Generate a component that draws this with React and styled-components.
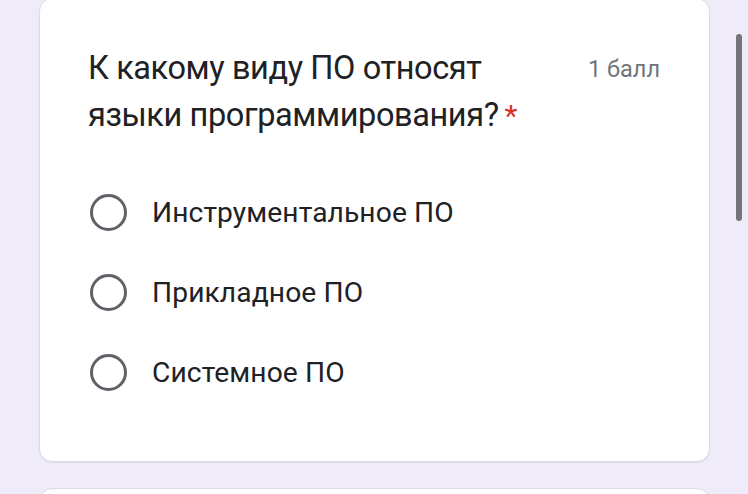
import React from "react";
import styled, { createGlobalStyle } from "styled-components";

const Global = createGlobalStyle`
  html, body { margin: 0; padding: 0; background: #efebf8; overflow: hidden; }
  body { font-family: Roboto, "Noto Sans", Arial, sans-serif; }
`;

const Page = styled.div`
  position: relative;
  width: 748px;
  height: 494px;
  overflow: hidden;
  display: flex;
  flex-direction: column;
  gap: 26px;
  padding: 0 38px 0 39px;
  box-sizing: border-box;
`;

const Card = styled.section`
  flex: none;
  margin-top: ${(p) => p.$offset || 0}px;
  background: #ffffff;
  border: 1px solid #dcdae2;
  border-radius: 13px;
  box-shadow: 0 1px 1px rgba(60, 60, 80, 0.08);
  box-sizing: border-box;
  height: ${(p) => p.$height}px;
  padding: 46px 48px 0 48px;
`;

const Header = styled.div`
  display: flex;
  justify-content: space-between;
  align-items: flex-start;
`;

const Title = styled.h2`
  margin: 0;
  width: 440px;
  font-family: Roboto, sans-serif;
  font-weight: 400;
  font-size: 32.5px;
  line-height: 47px;
  color: #202124;
  letter-spacing: -0.4px;
`;

const Star = styled.span`
  color: #d93025;
  margin-left: 6px;
  font-size: 30px;
`;

const Points = styled.span`
  font-family: Roboto, sans-serif;
  font-size: 23.5px;
  line-height: 47px;
  color: #70757a;
  white-space: nowrap;
  margin-top: 1px;
  margin-right: 1px;
`;

const Options = styled.div`
  display: flex;
  flex-direction: column;
  gap: 43px;
  margin-top: 55px;
`;

const Option = styled.label`
  display: flex;
  align-items: center;
  gap: 25px;
  height: 37px;
  padding-left: 2px;
`;

const Radio = styled.span`
  width: 37px;
  height: 37px;
  box-sizing: border-box;
  border: 3.5px solid #5f6368;
  border-radius: 50%;
  flex: none;
`;

const OptionText = styled.span`
  font-family: Roboto, sans-serif;
  font-size: 28.2px;
  color: #202124;
  letter-spacing: 0.1px;
`;

const Scrollbar = styled.div`
  position: absolute;
  left: 736px;
  top: 34px;
  width: 6px;
  height: 187px;
  border-radius: 3px;
  background: #77737d;
`;

const options = ["Инструментальное ПО", "Прикладное ПО", "Системное ПО"];

export default function App() {
  return (
    <>
      <Global />
      <Page>
        <Card $offset={-2} $height={464}>
          <Header>
            <Title>
              К какому виду ПО относят языки программирования?<Star>*</Star>
            </Title>
            <Points>1 балл</Points>
          </Header>
          <Options>
            {options.map((o) => (
              <Option key={o}>
                <Radio />
                <OptionText>{o}</OptionText>
              </Option>
            ))}
          </Options>
        </Card>
        <Card $height={100} />
        <Scrollbar />
      </Page>
    </>
  );
}
